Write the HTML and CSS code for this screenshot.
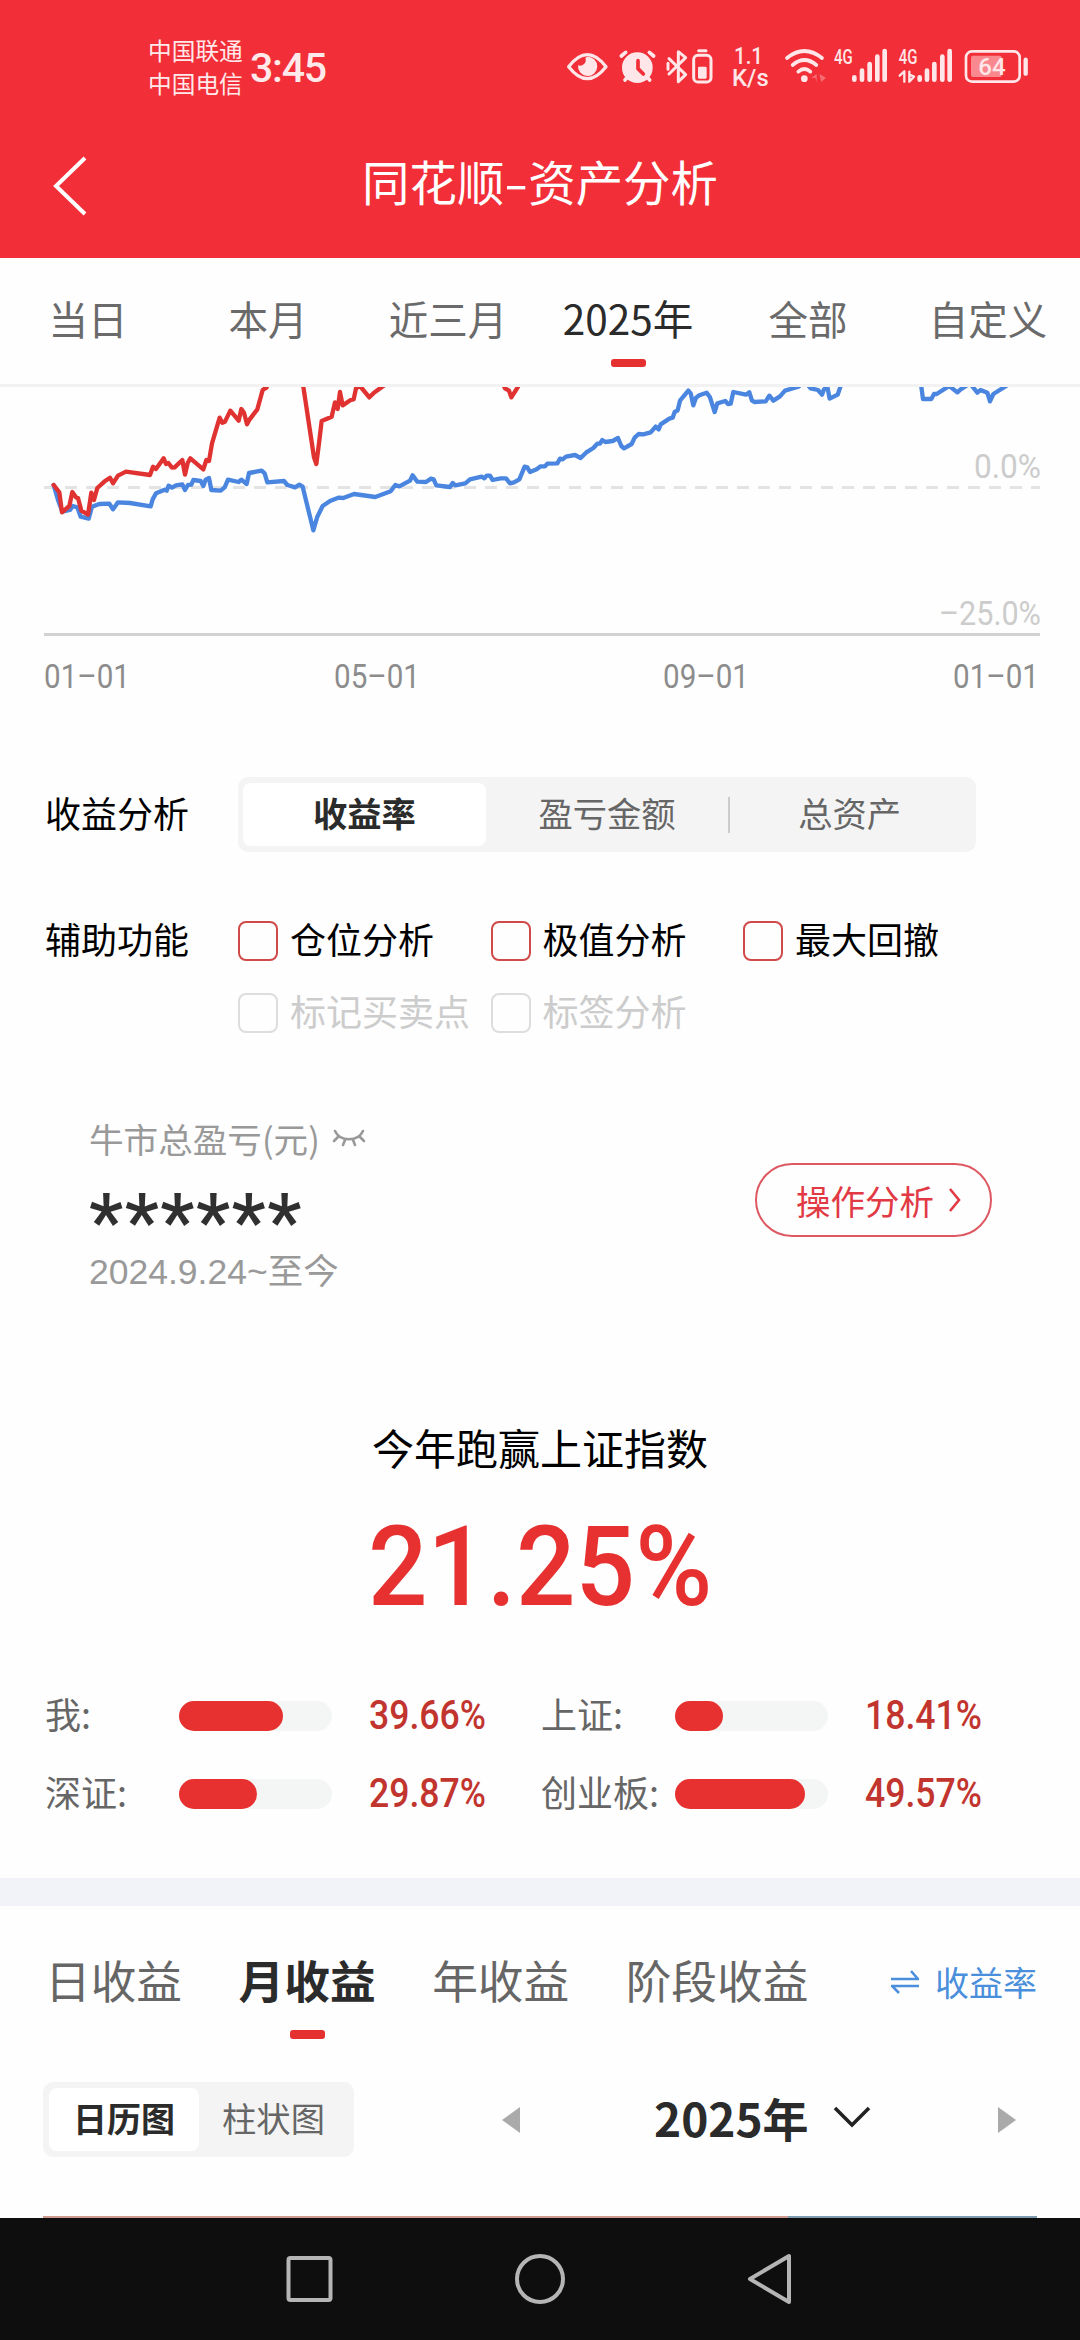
FILE: index.html
```html
<!DOCTYPE html>
<html lang="zh-CN">
<head>
<meta charset="utf-8">
<title>同花顺-资产分析</title>
<link rel="stylesheet" href="styles.css">
</head>
<body>
<header class="top">
  <div class="status">
    <div class="carriers"><span>中国联通</span><span>中国电信</span></div>
    <div class="clock">3:45</div>
    <svg class="status-icons" viewBox="0 0 1500 210" fill="none" stroke="#ffe6e8" stroke-linecap="round" stroke-linejoin="round">
      <path d="M56 110Q112 38 168 110Q112 182 56 110Z" stroke-width="10"/>
      <path d="M112 80A29 29 0 1 1 84 106A17 17 0 0 0 106 84Z" fill="#ffe6e8" stroke="none"/>
      <circle cx="262" cy="113" r="46" fill="#ffe6e8" stroke="none"/>
      <path d="M214 78L227 67M311 78L298 67M225 150L231 143M299 150L293 143" stroke-width="11"/>
      <path d="M264 92V116L280 132" stroke="#f22f38" stroke-width="11"/>
      <path d="M357 86L407 134L385 155V65L407 83L357 132M354 100V118" stroke-width="9"/>
      <path d="M446 62H468" stroke-width="9"/>
      <rect x="431" y="76" width="52" height="80" rx="13" stroke-width="9"/>
      <rect x="444" y="110" width="26" height="36" rx="4" fill="#ffe6e8" stroke="none"/>
      <path d="M711 84Q763 42 816 84M728 105Q763 75 799 105M745 125Q763 109 781 125" stroke-width="11"/>
      <circle cx="763" cy="146" r="10" fill="#ffe6e8" stroke="none"/>
      <path d="M784 143L800 132V156L796 143ZM808 132L828 143L814 156Z" fill="#f76d74" stroke="none"/>
      <path d="M913 142V149M936 122V149M959 102V149M982 80V149M1004 63V149" stroke-width="14"/>
      <path d="M1109 142V149M1131 122V149M1153 102V149M1177 80V149M1199 63V149" stroke-width="14"/>
      <path d="M1049 137L1063 124V155M1078 125V155L1092 140L1078 134" stroke-width="7"/>
      <rect x="1248" y="64" width="161" height="91" rx="18" stroke-width="8"/>
      <rect x="1263" y="77" width="92" height="64" rx="6" fill="#f9898f" stroke="none"/>
      <path d="M1427 89V131" stroke-width="13"/>
      <g class="status-text">
        <text x="552" y="101" font-size="70" textLength="87" lengthAdjust="spacingAndGlyphs">1.1</text>
        <text x="546" y="168" font-size="70" textLength="110" lengthAdjust="spacingAndGlyphs">K/s</text>
        <text x="852" y="101" font-size="60" textLength="56" lengthAdjust="spacingAndGlyphs">4G</text>
        <text x="1046" y="101" font-size="60" textLength="56" lengthAdjust="spacingAndGlyphs">4G</text>
        <text x="1285" y="135" font-size="71" textLength="82" lengthAdjust="spacingAndGlyphs">64</text>
      </g>
    </svg>
  </div>
  <div class="titlebar">
    <svg class="back" viewBox="0 0 36 60" fill="none" stroke="#fff" stroke-width="4"><path d="M33 2L4 30L33 58"/></svg>
    <h1>同花顺<span class="dash">-</span>资产分析</h1>
  </div>
</header>

<nav class="range">
  <span>当日</span><span>本月</span><span>近三月</span><span class="on">2025年</span><span>全部</span><span>自定义</span>
</nav>

<svg class="chart" viewBox="0 387 1080 310">
  <path d="M44 487.500H1040" stroke="#e3e3e3" stroke-width="3" stroke-dasharray="12 9"/>
  <path d="M44 634.500H1040" stroke="#d1d1d1" stroke-width="3"/>
  <g transform="translate(30 370) scale(.33333)" fill="none" stroke-width="13" stroke-linejoin="round" stroke-linecap="round">
    <polyline stroke="#4a86e0" points="71,345 84,390 97,425 120,420 128,408 142,412 152,440 176,446 186,410 208,402 238,401 249,418 264,397 300,399 362,409 368,388 378,370 404,359 410,362 416,347 426,353 438,346 457,343 465,360 474,345 484,344 490,330 512,333 520,348 527,329 537,324 544,360 572,362 584,352 594,329 626,336 634,329 650,342 657,309 695,302 704,310 712,337 762,333 772,345 795,352 808,344 818,350 850,481 862,440 878,408 900,393 925,383 940,384 972,372 1036,381 1082,364 1096,345 1108,349 1140,332 1148,316 1162,335 1188,336 1203,326 1211,328 1219,346 1260,351 1268,339 1276,346 1306,340 1320,328 1355,320 1363,325 1370,317 1380,317 1388,330 1412,325 1428,325 1440,340 1452,337 1468,328 1484,290 1492,292 1500,306 1520,298 1532,289 1545,289 1552,281 1582,280 1590,266 1598,268 1608,260 1635,255 1652,264 1668,248 1690,234 1702,221 1710,221 1717,210 1726,216 1748,213 1764,204 1774,228 1782,235 1805,222 1814,203 1826,192 1840,193 1862,187 1877,170 1886,178 1892,163 1918,146 1928,143 1934,126 1943,121 1950,92 1975,62 1982,70 1990,106 1998,83 2008,76 2030,68 2040,82 2054,126 2062,100 2086,93 2094,102 2102,101 2110,66 2148,74 2158,67 2166,92 2174,96 2207,94 2218,77 2230,92 2250,79 2265,62 2305,50 2325,35 2342,55 2364,60 2376,74 2382,58 2392,50 2399,86 2423,74 2432,48 2470,20 2660,20 2674,50 2679,87 2704,87 2712,72 2720,72 2745,56 2758,48 2782,67 2792,58 2820,40 2842,68 2852,60 2872,68 2880,94 2890,72 2925,50 2940,40"/>
    <polyline stroke="#e13232" points="71,345 88,367 96,427 118,408 127,366 138,382 144,384 154,422 174,434 184,368 192,390 202,354 224,334 240,323 249,340 264,317 288,305 360,315 369,290 378,297 401,265 408,282 415,279 426,293 434,292 457,270 465,314 473,279 481,265 520,298 529,270 537,273 546,220 569,143 577,158 585,155 601,122 626,152 634,117 642,128 651,163 659,148 682,118 698,60 710,52 720,20 815,20 820,50 852,262 859,282 867,220 875,153 905,140 915,97 923,117 930,66 938,106 962,90 971,88 978,55 990,48 1018,82 1032,68 1060,48 1100,20 1410,20 1425,55 1437,62 1444,82 1463,52 1480,20"/>
  </g>
  <g class="ylab">
    <text x="974" y="478" textLength="67" lengthAdjust="spacingAndGlyphs">0.0%</text>
    <text x="939" y="625" textLength="102" lengthAdjust="spacingAndGlyphs">–25.0%</text>
  </g>
  <g class="xlab">
    <text x="44" y="688" textLength="86" lengthAdjust="spacingAndGlyphs">01–01</text>
    <text x="334" y="688" textLength="86" lengthAdjust="spacingAndGlyphs">05–01</text>
    <text x="663" y="688" textLength="86" lengthAdjust="spacingAndGlyphs">09–01</text>
    <text x="953" y="688" textLength="86" lengthAdjust="spacingAndGlyphs">01–01</text>
  </g>
</svg>

<section class="options">
  <div class="opt-row seg-row">
    <span class="opt-name">收益分析</span>
    <div class="seg"><span class="on">收益率</span><span>盈亏金额</span><span class="sep">总资产</span></div>
  </div>
  <div class="opt-row checks-row">
    <span class="opt-name">辅助功能</span>
    <div class="checks">
      <label><i></i>仓位分析</label><label><i></i>极值分析</label><label><i></i>最大回撤</label>
      <label class="off"><i></i>标记买卖点</label><label class="off"><i></i>标签分析</label>
    </div>
  </div>
</section>

<section class="bull">
  <div>
    <div class="bull-name">牛市总盈亏(元)
      <svg class="eye" viewBox="0 0 34 18" fill="none" stroke="#999" stroke-width="2.600" stroke-linecap="round"><path d="M3 2C8 13 26 13 31 2M6 8L2 12M28 8L32 12M13 11L11 16M21 11L23 16"/></svg>
    </div>
    <div class="stars">******</div>
    <div class="since">2024.9.24~至今</div>
  </div>
  <div class="pill">操作分析<svg viewBox="0 0 14 26" fill="none" stroke="#e23a45" stroke-width="2.600"><path d="M2 2L11 13L2 24"/></svg></div>
</section>

<section class="beat">
  <h2>今年跑赢上证指数</h2>
  <div class="big"><span>21.25%</span></div>
  <div class="stats">
    <div class="stat"><span>我:</span><b class="bar"><i style="width:104px"></i></b><em>39.66%</em></div>
    <div class="stat"><span>上证:</span><b class="bar"><i style="width:48px"></i></b><em>18.41%</em></div>
    <div class="stat"><span>深证:</span><b class="bar"><i style="width:78px"></i></b><em>29.87%</em></div>
    <div class="stat"><span>创业板:</span><b class="bar"><i style="width:130px"></i></b><em>49.57%</em></div>
  </div>
</section>

<section class="periods">
  <div class="ptabs">
    <span>日收益</span><span class="on">月收益</span><span>年收益</span><span>阶段收益</span>
    <div class="swap"><svg viewBox="0 0 28 24" fill="none" stroke="#4a8fdc" stroke-width="2.600"><path d="M0 9H27L20 1M28 16H1L8 23"/></svg>收益率</div>
  </div>
  <div class="prow">
    <div class="seg small"><span class="on">日历图</span><span>柱状图</span></div>
    <svg class="tri" viewBox="0 0 19 26"><path d="M0 13L18 0V26Z" fill="#aaa"/></svg>
    <div class="year"><span>2025年</span><svg viewBox="0 0 38 22" fill="none" stroke="#222" stroke-width="3.600"><path d="M2 2L19 19L36 2"/></svg></div>
    <svg class="tri" viewBox="0 0 19 26"><path d="M19 13L1 0V26Z" fill="#aaa"/></svg>
  </div>
  <div class="cal-edge"></div>
</section>

<footer class="sysnav">
  <svg viewBox="0 0 50 54"><rect x="3.500" y="6" width="42" height="42" rx="2"/></svg>
  <svg viewBox="0 0 50 54"><circle cx="25" cy="27" r="23"/></svg>
  <svg viewBox="0 0 50 54"><path d="M44 4V50L5 27Z"/></svg>
</footer>
</body>
</html>
```
FILE: styles.css
```css
* { box-sizing: border-box; margin: 0; padding: 0; }
body {
  width: 1080px; height: 2340px; overflow: hidden; background: #fefefe; color: #000;
  font-family: "Noto Sans CJK SC", sans-serif; font-size: 36px; line-height: 1;
  display: flex; flex-direction: column;
}
svg { display: block; flex: none; }
i, em { font-style: normal; }
h1, h2 { font-weight: 400; }

.top { height: 258px; background: #f22f38; color: #fff; }
.status { height: 122px; display: flex; align-items: flex-start; padding-left: 148px; color: #ffe9ea; }
.carriers { display: flex; flex-direction: column; gap: 9px; padding-top: 38px; font-size: 23.700px; line-height: 24px; width: 102px; }
.clock { font: 500 41px/44px Roboto, sans-serif; padding-top: 46px; width: 300px; letter-spacing: -1.200px; }
.status-icons { width: 500px; height: 70px; margin-top: 30px; }
.status-text { font-family: Roboto, sans-serif; font-weight: 500; fill: #ffe6e8; stroke: none; }
.titlebar { height: 128px; display: flex; align-items: center; padding-left: 52px; }
.back { width: 36px; height: 60px; }
.titlebar h1 { width: 904px; text-align: center; font-size: 47.400px; padding-bottom: 11px; }
.dash { display: inline-block; width: 24px; transform: scaleX(1.5); }

.range { height: 129px; flex: none; display: grid; grid-template-columns: repeat(6, 180px); margin-left: -2px; width: 1082px; border-bottom: 3px solid #f2f2f2; color: #6a6a6a; font-size: 39.500px; text-align: center; line-height: 120px; }
.range .on { color: #2b2b2b; font-size: 40.500px; display: flex; flex-direction: column; align-items: center; }
.range .on::after { content: ""; width: 35px; height: 8px; margin-top: -19px; border-radius: 3px; background: #e53030; }

.chart { width: 1080px; height: 310px; }
.chart text { font-family: Roboto, sans-serif; font-size: 33px; }
.ylab { fill: #ccc; }
.xlab { fill: #8c8c8c; }

.options { height: 376px; padding: 80px 0 0 45px; }
.opt-row { display: flex; }
.opt-name { width: 193px; }
.seg-row { align-items: center; height: 75px; }
.seg-row .opt-name, .checks-row .opt-name { transform: translateY(-3px); }
.seg { width: 738px; height: 75px; padding: 6px 5px; border-radius: 10px; background: #f4f4f4; display: grid; grid-template-columns: repeat(3, 1fr); font-size: 34.300px; line-height: 59px; color: #666; text-align: center; }
.seg .on { background: #fff; border-radius: 8px; color: #2b2b2b; font-weight: 700; height: 63px; }
.seg .sep { background: linear-gradient(#ccc, #ccc) 0 14px / 2px 36px no-repeat; }
.checks-row { margin-top: 69px; line-height: 40px; }
.checks { display: grid; grid-template-columns: 252.500px 252.500px 252.500px; row-gap: 32px; }
.checks label { display: flex; height: 40px; line-height: 34px; gap: 12px; white-space: nowrap; }
.checks i { width: 40px; height: 40px; border: 2px solid #d04a4a; border-radius: 8px; }
.checks .off { color: #ccc; }
.checks .off i { border-color: #ddd; }

.bull { height: 327px; display: flex; justify-content: space-between; align-items: flex-start; padding: 46px 88px 0 89px; color: #999; font-size: 34.600px; }
.bull-name { display: flex; gap: 12px; align-items: center; height: 38px; }
.eye { width: 34px; height: 18px; }
.stars { font: 500 77px/80px Roboto, sans-serif; color: #303030; letter-spacing: 1.500px; height: 95px; padding-top: 26px; }
.since { font-family: "Liberation Sans", "Noto Sans CJK SC", sans-serif; line-height: 40px; font-size: 35.500px; }
.pill { width: 237px; height: 74px; margin-top: 44px; border: 2px solid #de5862; border-radius: 37px; display: flex; align-items: center; padding: 0 0 0 39px; gap: 14px; color: #e23a45; font-size: 34.500px; }
.pill svg { width: 14px; height: 26px; }

.beat { height: 478px; padding-top: 26px; }
.beat h2 { font-size: 42px; line-height: 42px; text-align: center; }
.big { color: #e73030; font: 500 112px/112px Roboto, sans-serif; text-align: center; margin-top: 43px; height: 112px; }
.big span { display: inline-block; transform: scaleX(.935); }
.stats { display: grid; grid-template-columns: 496px 494px; row-gap: 48px; padding: 77px 0 0 45px; margin-top: 1px; }
.stat { display: flex; align-items: center; height: 30px; color: #666; }
.stat span { width: 134px; white-space: nowrap; position: relative; top: -3px; }
.bar { width: 153px; height: 30px; border-radius: 15px; background: #f4f6f6; flex: none; }
.bar i { display: block; height: 30px; border-radius: 15px; background: #e73030; }
.stat em { width: 154px; text-align: right; color: #c2352f; font: 500 40px/30px Roboto, sans-serif; transform: scaleX(.89); transform-origin: right; }

.periods { height: 340px; border-top: 28px solid #f2f3f8; }
.ptabs { height: 176px; display: flex; padding: 0 43px 0 45px; gap: 56.500px; font-size: 45.700px; line-height: 147px; color: #666; white-space: nowrap; }
.ptabs .on { color: #2b2b2b; font-weight: 700; display: flex; flex-direction: column; align-items: center; }
.ptabs .on::after { content: ""; width: 35px; height: 9px; margin-top: -23px; border-radius: 3px; background: #e53030; }
.swap { margin-left: auto; display: flex; align-items: center; gap: 16px; height: 152px; font-size: 34px; line-height: 34px; color: #4a8fdc; }
.swap svg { width: 28px; height: 24px; }
.prow { display: flex; align-items: center; padding-left: 43px; height: 75px; }
.seg.small { width: 311px; padding: 6px; grid-template-columns: 150px 149px; }
.seg.small .on { font-size: 34px; }
.tri { width: 19px; height: 26px; margin-left: 148px; }
.year { margin-left: 133px; display: flex; align-items: center; width: 343px; gap: 24px; font-size: 46px; font-weight: 700; color: #2b2b2b; }
.year span { margin-top: -6px; }
.year svg { width: 38px; height: 22px; margin-top: -5px; }
.year + .tri { margin-left: 0; }
.cal-edge { margin: 59px 43px 0; height: 2px; background: linear-gradient(90deg, #cf9b90 745px, #7f9bb0 745px); }

.sysnav { height: 122px; background: #0e0e0e; display: flex; justify-content: center; gap: 180px; padding-top: 34px; }
.sysnav svg { width: 50px; height: 54px; fill: none; stroke: #b5b5b5; stroke-width: 4; stroke-linejoin: round; }
```
